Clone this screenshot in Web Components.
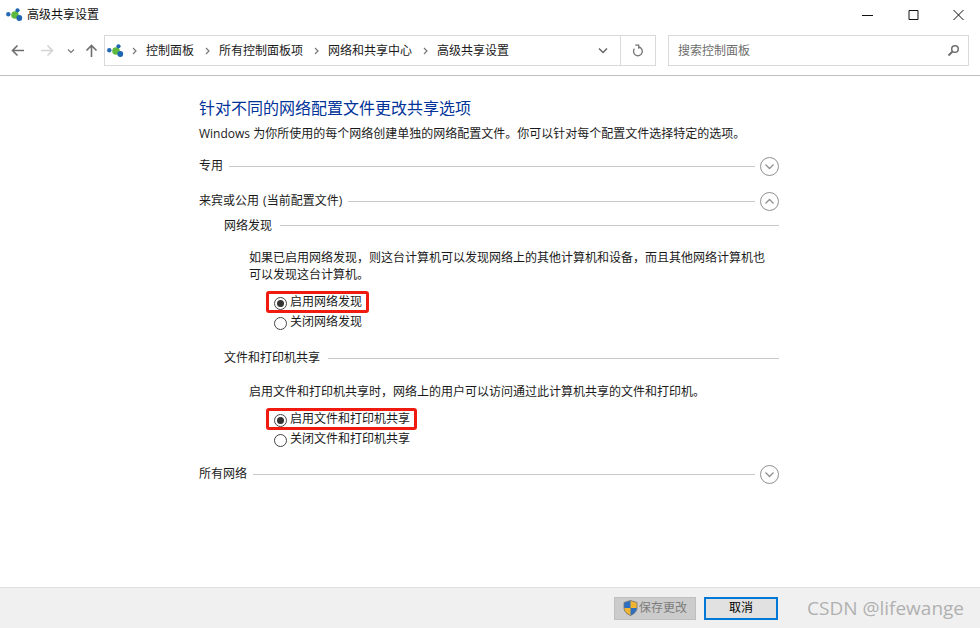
<!DOCTYPE html>
<html lang="zh">
<head>
<meta charset="utf-8">
<title>高级共享设置</title>
<style>
  html, body { margin: 0; height: 100%; }
  body {
    font: 12px/16px "Open Sans", "Noto Sans CJK SC", "Liberation Sans", sans-serif;
    color: #1a1a1a;
    background: #fff;
  }
  share-window { height: 628px; }
</style>
</head>
<body>
<share-window>
  <share-heading slot="main"></share-heading>
  <group-header slot="main" label="专用" arrow="down" style="margin-top:13px"></group-header>
  <group-header slot="main" label="来宾或公用 (当前配置文件)" arrow="up" style="margin-top:13px;word-spacing:1px"></group-header>
  <sub-section slot="main" label="网络发现" text="如果已启用网络发现，则这台计算机可以发现网络上的其他计算机和设备，而且其他网络计算机也可以发现这台计算机。" on="启用网络发现" off="关闭网络发现" style="margin-top:6px;--line-up:2px"></sub-section>
  <sub-section slot="main" label="文件和打印机共享" text="启用文件和打印机共享时，网络上的用户可以访问通过此计算机共享的文件和打印机。" on="启用文件和打印机共享" off="关闭文件和打印机共享" style="margin-top:18px;--p-top:17px"></sub-section>
  <group-header slot="main" label="所有网络" arrow="down" style="margin-top:14px"></group-header>
</share-window>
<script>
// small inline icon used in title bar and address bar
const NET_ICON = `<svg class="net" width="17" height="14" viewBox="0 0 17 14">
  <circle cx="2.3" cy="6.3" r="2.2" fill="#2469b3"/>
  <circle cx="9" cy="7" r="3.8" fill="#5fb93f"/>
  <circle cx="11.5" cy="2.3" r="2.1" fill="#1f66b0"/>
  <circle cx="13.3" cy="10" r="2.9" fill="#1f66b0"/>
</svg>`;

class ShareWindow extends HTMLElement {
  constructor() {
    super();
    this.attachShadow({ mode: "open" });
    this.shadowRoot.innerHTML = `
      <style>
        :host { display: flex; flex-direction: column; width: 980px; }
        .title { display: flex; align-items: center; height: 29px; padding-left: 6px; gap: 4px; }
        .title span { flex: 1; color: #111; }
        .caps { display: flex; gap: 34.5px; padding-right: 16px; }
        .caps svg { display: block; }
        main { flex: 1; padding: 22px 201px 0 199px; display: flex; flex-direction: column; }
        .foot {
          height: 40px; background: #f0f0f0; border-top: 1px solid #dfdfdf;
          display: flex; align-items: center; padding-left: 614px;
        }
        .mark { margin-left: 29px; font: 19px/24px "Open Sans", "Liberation Sans", sans-serif; color: #b0b0b0; }
      </style>
      <div class="title">
        ${NET_ICON}
        <span>高级共享设置</span>
        <div class="caps">
          <svg width="11" height="12" viewBox="0 0 11 12"><path d="M0 6.5h11" stroke="#111" fill="none"/></svg>
          <svg width="11" height="12" viewBox="0 0 11 12"><path d="M1 1.5h9v9H1z" stroke="#111" fill="none"/></svg>
          <svg width="11" height="12" viewBox="0 0 11 12"><path d="M.5 1l10 10M10.5 1L.5 11" stroke="#111" fill="none"/></svg>
        </div>
      </div>
      <nav-bar></nav-bar>
      <main><slot name="main"></slot></main>
      <div class="foot">
        <foot-button disabled shield>保存更改</foot-button>
        <foot-button primary style="margin-left:8px">取消</foot-button>
        <span class="mark">CSDN @lifewange</span>
      </div>
    `;
  }
}

class NavBar extends HTMLElement {
  constructor() {
    super();
    this.attachShadow({ mode: "open" });
    const crumbs = ["控制面板", "所有控制面板项", "网络和共享中心", "高级共享设置"];
    this.shadowRoot.innerHTML = `
      <style>
        :host {
          display: flex; align-items: flex-start; height: 40px; padding: 6px 0 0 11px;
          border-bottom: 1px solid #bfbfbf;
        }
        svg { display: block; flex: none; }
        .btns { display: flex; align-items: center; width: 93px; height: 31px; }
        .box {
          box-sizing: border-box; height: 31px; border: 1px solid #d9d9d9;
          display: flex; align-items: center; background: #fff;
        }
        .addr { width: 552px; padding-left: 2px; }
        .addr .chev { margin: 0 9px 0 11px; }
        .addr .net { margin-right: -3px; }
        .path { flex: 1; display: flex; align-items: center; }
        .drop { width: 34px; display: flex; justify-content: center; }
        .refresh {
          width: 34px; height: 29px; border-left: 1px solid #d9d9d9;
          display: flex; align-items: center; justify-content: center;
        }
        .search { width: 301px; margin-left: 12px; padding-left: 9px; color: #6d6d6d; }
        .search span { flex: 1; }
        .search svg { margin-right: 8px; }
      </style>
      <div class="btns">
        <svg width="13" height="13" viewBox="0 0 13 13" style="margin-right:17px"><path d="M13 6.500H1.500M6.500 1.500l-5 5 5 5" stroke="#6e6e6e" stroke-width="1.6" fill="none"/></svg>
        <svg width="13" height="13" viewBox="0 0 13 13" style="margin-right:13px"><path d="M0 6.500h11.500M6.500 1.500l5 5-5 5" stroke="#d4d4d4" stroke-width="1.6" fill="none"/></svg>
        <svg width="8" height="6" viewBox="0 0 8 6" style="margin-right:10px"><path d="M1 1.500l3 3 3-3" stroke="#777" stroke-width="1.2" fill="none"/></svg>
        <svg width="13" height="13" viewBox="0 0 13 13"><path d="M6.500 13V1.500M1.500 6.500l5-5 5 5" stroke="#6e6e6e" stroke-width="1.6" fill="none"/></svg>
      </div>
      <div class="box addr">
        <div class="path">
          ${NET_ICON}
          ${crumbs.map((c) => `<svg class="chev" width="5" height="8" viewBox="0 0 5 8"><path d="M1 1l3 3-3 3" stroke="#777" stroke-width="1.2" fill="none"/></svg><span>${c}</span>`).join("")}
        </div>
        <div class="drop"><svg width="10" height="7" viewBox="0 0 10 7"><path d="M1 1.500l4 4 4-4" stroke="#666" stroke-width="1.5" fill="none"/></svg></div>
        <div class="refresh"><svg width="12" height="13" viewBox="0 0 12 13"><path d="M3.200 1.200h3.500v3.500" stroke="#777" stroke-width="1.300" fill="none"/><path d="M6.700 3a4.400 4.400 0 1 1-4.300 1.700" stroke="#777" stroke-width="1.300" fill="none"/></svg></div>
      </div>
      <div class="box search">
        <span>搜索控制面板</span>
        <svg width="13" height="13" viewBox="0 0 13 13"><circle cx="8" cy="5" r="3.300" stroke="#707070" stroke-width="1.500" fill="none"/><path d="M5.500 7.500L1.500 11.500" stroke="#707070" stroke-width="2" fill="none"/></svg>
      </div>
    `;
  }
}

class ShareHeading extends HTMLElement {
  constructor() {
    super();
    this.attachShadow({ mode: "open" });
    this.shadowRoot.innerHTML = `
      <style>
        :host { display: block; }
        h1 { margin: 0 0 8px; font-size: 16px; line-height: 20px; font-weight: 400; color: #003399; }
        p { margin: 0; }
      </style>
      <h1>针对不同的网络配置文件更改共享选项</h1>
      <p>Windows 为你所使用的每个网络创建单独的网络配置文件。你可以针对每个配置文件选择特定的选项。</p>
    `;
  }
}

class GroupHeader extends HTMLElement {
  constructor() {
    super();
    this.attachShadow({ mode: "open" });
    const path = this.getAttribute("arrow") === "up" ? "M5.500 11.500l4-4 4 4" : "M5.500 7.500l4 4 4-4";
    this.shadowRoot.innerHTML = `
      <style>
        :host { display: flex; align-items: center; height: 22px; }
        i { flex: 1; height: 1px; background: #c8c8c8; margin: 0 5px 0 6px; }
        svg { display: block; }
      </style>
      <span>${this.getAttribute("label")}</span>
      <i></i>
      <svg width="19" height="19" viewBox="0 0 19 19">
        <circle cx="9.500" cy="9.500" r="9" fill="#fff" stroke="#8f8f8f"/>
        <path d="${path}" fill="none" stroke="#8f8f8f" stroke-width="1.300"/>
      </svg>
    `;
  }
}

class SubSection extends HTMLElement {
  constructor() {
    super();
    this.attachShadow({ mode: "open" });
    this.shadowRoot.innerHTML = `
      <style>
        :host { display: block; padding-left: 25px; }
        .head { display: flex; align-items: center; height: 16px; }
        .head i { flex: 1; height: 1px; background: #c8c8c8; margin: 0 0 var(--line-up, 0) 8px; }
        p { margin: var(--p-top, 15px) 13px 0 25px; line-height: 17px; }
        .opts { margin: 9px 0 0 25px; display: flex; flex-direction: column; }
      </style>
      <div class="head"><span>${this.getAttribute("label")}</span><i></i></div>
      <p>${this.getAttribute("text")}</p>
      <div class="opts">
        <radio-option checked marked>${this.getAttribute("on")}</radio-option>
        <radio-option>${this.getAttribute("off")}</radio-option>
      </div>
    `;
  }
}

class RadioOption extends HTMLElement {
  constructor() {
    super();
    this.attachShadow({ mode: "open" });
    const checked = this.hasAttribute("checked");
    this.shadowRoot.innerHTML = `
      <style>
        :host { display: flex; align-items: center; height: 20px; position: relative; padding-left: 25px; gap: 3px; }
        svg { display: block; flex: none; margin-top: 3px; }
        .mark {
          position: absolute; left: 17px; top: -1px; height: 16px;
          border: 3px solid #f01a0e; border-radius: 3px; pointer-events: none;
        }
      </style>
      <svg width="13" height="13" viewBox="0 0 13 13">
        <circle cx="6.500" cy="6.500" r="6" fill="#fff" stroke="#444"/>
        ${checked ? '<circle cx="6.500" cy="6.500" r="3.500" fill="#333"/>' : ""}
      </svg>
      <span><slot></slot></span>
    `;
    if (this.hasAttribute("marked")) {
      const m = document.createElement("div");
      m.className = "mark";
      m.style.width = this.textContent.length * 12 + 25 + "px";
      this.shadowRoot.appendChild(m);
    }
  }
}

class FootButton extends HTMLElement {
  constructor() {
    super();
    this.attachShadow({ mode: "open" });
    const shield = this.hasAttribute("shield")
      ? `<svg width="15" height="16" viewBox="0 0 15 16">
          <path d="M7.500 .5L14 2.500V8c0 3.500-3 6-6.500 7.500C4 14 1 11.500 1 8V2.500z" fill="#2f6fc0"/>
          <path d="M7.500 .5L14 2.500V8H7.500zM7.500 8v7.500C4 14 1 11.500 1 8z" fill="#f2b531"/>
          <path d="M7.500 .5L14 2.500V8c0 3.500-3 6-6.500 7.500C4 14 1 11.500 1 8V2.500z" fill="none" stroke="#777" stroke-width=".8"/>
        </svg>` : "";
    this.shadowRoot.innerHTML = `
      <style>
        :host { display: flex; align-items: center; justify-content: center; box-sizing: border-box; height: 23px; gap: 1px; }
        :host([disabled]) { width: 82px; background: #ccc; border: 1px solid #bfbfbf; color: #7d7d7d; }
        :host([primary]) { width: 74px; background: #e1e1e1; border: 2px solid #0078d7; color: #000; }
        svg { display: block; }
      </style>
      ${shield}<slot></slot>
    `;
  }
}

customElements.define("nav-bar", NavBar);
customElements.define("share-heading", ShareHeading);
customElements.define("group-header", GroupHeader);
customElements.define("radio-option", RadioOption);
customElements.define("sub-section", SubSection);
customElements.define("foot-button", FootButton);
customElements.define("share-window", ShareWindow);
</script>
</body>
</html>
